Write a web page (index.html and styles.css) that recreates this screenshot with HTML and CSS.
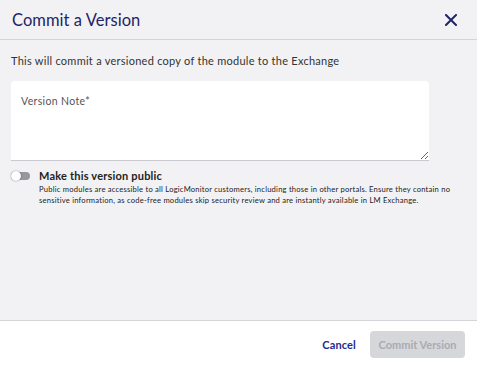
FILE: index.html
```html
<!DOCTYPE html>
<html lang="en">
<head>
<meta charset="utf-8">
<title>Commit a Version</title>
<link rel="stylesheet" href="styles.css">
</head>
<body>
<div class="dialog">
  <header class="header">
    <h1 class="title">Commit a Version</h1>
    <button class="close" aria-label="Close">
      <svg width="12" height="12" viewBox="0 0 12 12"><path d="M1 1 L11 11 M11 1 L1 11" stroke="#1f2566" stroke-width="2" stroke-linecap="square"/></svg>
    </button>
  </header>
  <main class="body">
    <p class="desc">This will commit a versioned copy of the module to the Exchange</p>
    <div class="field">
      <textarea class="note" placeholder="Version Note*"></textarea>
    </div>
    <div class="toggle-row">
      <span class="switch"><span class="knob"></span></span>
      <div class="toggle-text">
        <div class="toggle-label">Make this version public</div>
        <p class="toggle-help">Public modules are accessible to all LogicMonitor customers, including those in other portals. Ensure they contain no sensitive information, as code-free modules skip security review and are instantly available in LM Exchange.</p>
      </div>
    </div>
  </main>
  <footer class="footer">
    <button class="cancel">Cancel</button>
    <button class="commit" disabled>Commit Version</button>
  </footer>
</div>
</body>
</html>
```
FILE: styles.css
```css
* { box-sizing: border-box; }
html, body { margin: 0; padding: 0; height: 100%; }
body {
  font-family: "Lato", "Open Sans", sans-serif;
  background: #f2f2f4;
  color: #333;
}
.dialog {
  display: flex;
  flex-direction: column;
  height: 368px;
  width: 477px;
}
.header {
  display: flex;
  align-items: center;
  justify-content: space-between;
  height: 40px;
  padding: 0 20px 0 12px;
  border-bottom: 1px solid #d3d3d8;
}
.title {
  margin: 0;
  font-size: 16.5px;
  font-weight: 400;
  color: #1f2566;
  letter-spacing: 0.05px;
}
.close {
  border: 0;
  background: none;
  padding: 0;
  width: 12px;
  height: 12px;
  display: flex;
}
.body {
  flex: 1;
  padding: 0 12px 0 11px;
}
.desc {
  margin: 14px 0 0 0;
  font-size: 11px;
  line-height: 14px;
  letter-spacing: 0.26px;
  color: #333;
}
.field {
  margin-top: 13px;
  width: 418px;
}
.note {
  display: block;
  width: 100%;
  height: 80px;
  border: 0;
  border-bottom: 1px solid #c9c9cf;
  border-radius: 4px 4px 0 0;
  background: #fff;
  padding: 14px 10px;
  font-family: inherit;
  font-size: 10.5px;
  letter-spacing: 0.35px;
  color: #333;
  resize: vertical;
  outline: none;
}
.note::placeholder { color: #555; }
.toggle-row {
  display: flex;
  align-items: flex-start;
  gap: 9px;
  margin-top: 8px;
}
.switch {
  position: relative;
  flex: none;
  width: 19px;
  height: 8px;
  margin-top: 3px;
  border-radius: 4px;
  background: #97989e;
}
.knob {
  position: absolute;
  left: 0;
  top: -1px;
  width: 10px;
  height: 10px;
  border-radius: 50%;
  background: #fff;
  box-shadow: 0 0 1.5px rgba(0,0,0,0.55);
}
.toggle-label {
  font-size: 11px;
  font-weight: 700;
  color: #222;
  line-height: 14px;
  letter-spacing: 0.2px;
}
.toggle-help {
  margin: 1px 0 0 0;
  font-size: 7.6px;
  line-height: 11px;
  letter-spacing: 0.22px;
  color: #222;
}
.footer {
  display: flex;
  justify-content: flex-end;
  align-items: center;
  gap: 14px;
  height: 48px;
  padding: 0 12px 0 0;
  border-top: 1px solid #d3d3d8;
  background: #fff;
}
.cancel {
  border: 0;
  background: none;
  padding: 0;
  font-family: inherit;
  font-size: 11px;
  font-weight: 700;
  letter-spacing: 0.15px;
  color: #1f2a8c;
  cursor: pointer;
}
.commit {
  border: 0;
  border-radius: 4px;
  background: #d6d7db;
  color: #a9abb1;
  width: 95px;
  height: 27px;
  font-family: inherit;
  font-size: 11px;
  font-weight: 700;
  padding: 0;
}
```
